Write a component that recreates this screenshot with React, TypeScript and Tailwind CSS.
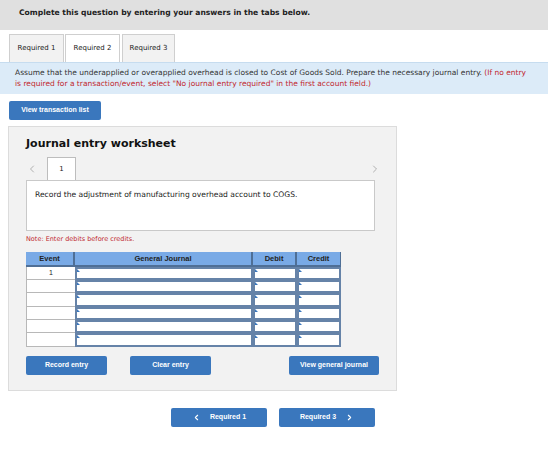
import { ChevronLeft, ChevronRight } from "lucide-react";

const verdana = "font-['DejaVu_Sans',Verdana,sans-serif]";
const arial = "font-['Liberation_Sans',Arial,sans-serif]";

function Btn({ children, className = "" }: { children: React.ReactNode; className?: string }) {
  return (
    <div
      className={`flex h-[19px] items-center justify-center rounded-[2px] bg-[#3a77bd] text-[7px] font-bold text-white ${arial} ${className}`}
    >
      {children}
    </div>
  );
}

function InputCell() {
  return (
    <div className="relative h-full border-2 border-[#6683a8] bg-white">
      <span className="absolute left-0 top-0 h-0 w-0 border-l-[3px] border-t-[3px] border-l-[#3a77bd] border-t-transparent" />
    </div>
  );
}

export default function App() {
  const rows = ["1", "", "", "", "", ""];
  return (
    <div className={`h-[451px] w-[560px] bg-white ${verdana} text-[#222]`}>
      <div className="h-[30px] w-[548px] bg-[#e0e0e0] pl-[19px] pt-[8px] text-[7.6px] font-bold leading-[10px]">
        Complete this question by entering your answers in the tabs below.
      </div>

      <div className="ml-[9px] mt-[4px] flex h-[28px] items-stretch gap-[1px] text-[7px]">
        <div className="flex w-[55px] items-center justify-center border border-b-0 border-[#cfcfcf] bg-[#f2f2f2]">Required 1</div>
        <div className="flex w-[55px] items-center justify-center border border-b-0 border-[#cfcfcf] bg-white">Required 2</div>
        <div className="ml-[1px] flex w-[53px] items-center justify-center border border-b-0 border-[#cfcfcf] bg-[#f2f2f2]">Required 3</div>
      </div>

      <div className="w-[548px] border-t border-[#c6dcef] bg-[#dcebf8] px-[15px] py-[5px] text-[7.5px] leading-[10.5px] text-[#333]">
        Assume that the underapplied or overapplied overhead is closed to Cost of Goods Sold. Prepare the necessary journal entry.{" "}
        <span className="text-[#c1272d]">(If no entry is required for a transaction/event, select "No journal entry required" in the first account field.)</span>
      </div>

      <Btn className="ml-[9px] mt-[7px] w-[92px]">View transaction list</Btn>

      <div className="ml-[8px] mt-[6px] w-[389px] border border-[#dcdcdc] bg-[#f2f2f2] pb-[15px] pl-[17px] pr-[22px] pt-[10px]">
        <div className="text-[11px] font-bold leading-[14px] text-[#111]">Journal entry worksheet</div>
        <div className="mt-[6px] flex h-[23px] w-[355px] items-end">
          <ChevronLeft className="mb-[5px] h-[12px] w-[12px] text-[#9a9a9a]" strokeWidth={1.5} />
          <div className="ml-[9px] flex h-[23px] w-[29px] items-center justify-center border border-b-0 border-[#bdbdbd] bg-white text-[7px]">1</div>
          <div className="flex-1" />
          <ChevronRight className="mb-[5px] h-[12px] w-[12px] text-[#9a9a9a]" strokeWidth={1.5} />
        </div>
        <div className="h-[51px] w-[349px] border border-[#c9c9c9] bg-white px-[8px] pt-[8px] text-[7.6px]">
          Record the adjustment of manufacturing overhead account to COGS.
        </div>
        <div className="mt-[4px] text-[6.5px] text-[#c1272d]">Note: Enter debits before credits.</div>

        <div className={`mt-[7px] w-[315px] ${arial}`}>
          <div className="grid h-[15px] grid-cols-[49px_178px_44px_44px] border-b-2 border-[#4f6f96] bg-[#79aae6] text-[7.5px] font-bold text-[#222]">
            <div className="flex items-center justify-center border-r-2 border-[#4f6f96]">Event</div>
            <div className="flex items-center justify-center border-r-2 border-[#4f6f96]">General Journal</div>
            <div className="flex items-center justify-center border-r-2 border-[#4f6f96]">Debit</div>
            <div className="flex items-center justify-center border-r border-[#4f6f96]">Credit</div>
          </div>
          {rows.map((e, i) => (
            <div key={i} className="grid h-[13.3px] grid-cols-[49px_178px_44px_44px]">
              <div className="flex items-center justify-center border-b border-l border-[#b8b8b8] bg-white text-[7px]">{e}</div>
              <InputCell />
              <InputCell />
              <InputCell />
            </div>
          ))}
        </div>

        <div className="mt-[9px] flex w-[353px] gap-[23px]">
          <Btn className="w-[81px]">Record entry</Btn>
          <Btn className="w-[81px]">Clear entry</Btn>
          <div className="flex-1" />
          <Btn className="w-[90px]">View general journal</Btn>
        </div>
      </div>

      <div className="ml-[171px] mt-[17px] flex gap-[12px]">
        <Btn className="w-[96px] gap-[9px]">
          <ChevronLeft className="h-[9px] w-[9px]" strokeWidth={3} />
          Required 1
        </Btn>
        <Btn className="w-[96px] gap-[9px]">
          Required 3
          <ChevronRight className="h-[9px] w-[9px]" strokeWidth={3} />
        </Btn>
      </div>
    </div>
  );
}
